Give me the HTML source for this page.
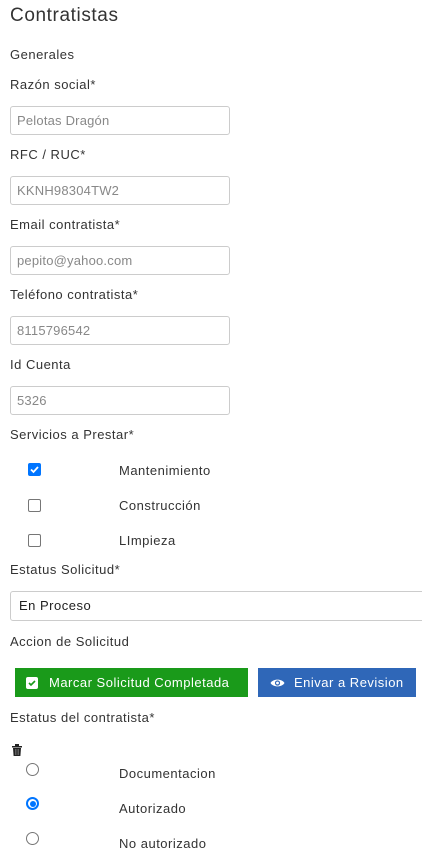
<!DOCTYPE html>
<html><head><meta charset="utf-8"><style>
*{box-sizing:border-box;margin:0;padding:0}
body{width:422px;height:858px;overflow:hidden;background:#fff;font-family:"Liberation Sans",sans-serif;color:#333;font-size:13px;position:relative;letter-spacing:0.5px}
.a{position:absolute;white-space:nowrap}
.lbl{font-size:13px;line-height:16px;top:1px}
.in{position:absolute;left:10px;width:220px;height:29px;border:1px solid #ccc;border-radius:3px;color:#888;font-size:13px;padding:6px 6px;line-height:16px;letter-spacing:0.2px}
.cb{position:absolute;left:28px;width:13px;height:13px;border:1px solid #767676;border-radius:2px;background:#fff}
.rd{position:absolute;left:26px;width:13px;height:13px;border:1px solid #767676;border-radius:50%;background:#fff}
.btn{position:absolute;top:668px;height:29px;color:#fff;font-size:13px;line-height:29px;white-space:nowrap}
</style></head><body>
<div class="a" style="left:10px;top:5px;font-size:19px;line-height:22px;color:#333;letter-spacing:0.6px">Contratistas</div>
<div class="a lbl" style="left:10px;top:47px">Generales</div>
<div class="a lbl" style="left:10px;top:77px">Razón social*</div>
<div class="in" style="top:106px">Pelotas Dragón</div>
<div class="a lbl" style="left:10px;top:147px">RFC / RUC*</div>
<div class="in" style="top:176px">KKNH98304TW2</div>
<div class="a lbl" style="left:10px;top:217px">Email contratista*</div>
<div class="in" style="top:246px">pepito@yahoo.com</div>
<div class="a lbl" style="left:10px;top:287px">Teléfono contratista*</div>
<div class="in" style="top:316px">8115796542</div>
<div class="a lbl" style="left:10px;top:357px">Id Cuenta</div>
<div class="in" style="top:386px">5326</div>
<div class="a lbl" style="left:10px;top:427px">Servicios a Prestar*</div>
<div class="cb" style="top:463px;background:#0075ff;border-color:#0075ff"><svg width="11" height="11" viewBox="0 0 11 11" style="position:absolute;left:0;top:0"><path d="M2 5.5l2.5 2.5 4.5-5" stroke="#fff" stroke-width="1.8" fill="none"/></svg></div>
<div class="a lbl" style="left:119px;top:463px">Mantenimiento</div>
<div class="cb" style="top:499px"></div>
<div class="a lbl" style="left:119px;top:498px">Construcción</div>
<div class="cb" style="top:534px"></div>
<div class="a lbl" style="left:119px;top:533px">LImpieza</div>
<div class="a lbl" style="left:10px;top:562px">Estatus Solicitud*</div>
<div style="position:absolute;left:10px;top:591px;width:420px;height:30px;border:1px solid #ccc;border-radius:3px;padding:6px 8px;line-height:16px;color:#222">En Proceso</div>
<div class="a lbl" style="left:10px;top:634px">Accion de Solicitud</div>
<div class="btn" style="left:15px;width:233px;background:#1a9a1a;padding-left:11px"><span style="display:inline-block;width:12px;height:12px;background:#fff;border-radius:2px;vertical-align:-2px;position:relative"><svg width="12" height="12" viewBox="0 0 12 12" style="position:absolute;left:0;top:0"><path d="M3 6l2 2 4-4" stroke="#1a9a1a" stroke-width="1.6" fill="none"/></svg></span><span style="margin-left:11px">Marcar Solicitud Completada</span></div>
<div class="btn" style="left:258px;width:158px;background:#2f67b8;padding-left:12px"><svg width="15" height="10" viewBox="0 0 15 10" style="vertical-align:-1px"><path d="M0.5 5C3 0.5 12 0.5 14.5 5C12 9.5 3 9.5 0.5 5Z" fill="#fff"/><circle cx="7.5" cy="5" r="2.6" fill="#2f67b8"/><circle cx="7.5" cy="5" r="1.4" fill="#fff"/></svg><span style="margin-left:9px">Enivar a Revision</span></div>
<div class="a lbl" style="left:10px;top:710px">Estatus del contratista*</div>
<svg class="a" style="left:12px;top:744px" width="10" height="12" viewBox="0 0 10 12"><rect x="3" y="0" width="4" height="2" fill="#222"/><rect x="0" y="2" width="10" height="1.5" fill="#222"/><path d="M1 4h8l-0.6 8H1.6Z" fill="#222"/><path d="M3.5 5v6M5 5v6M6.5 5v6" stroke="#888" stroke-width="0.6"/></svg>
<div class="rd" style="top:763px"></div>
<div class="a lbl" style="left:119px;top:766px">Documentacion</div>
<div class="rd" style="top:797px;border:2px solid #0075ff"><div style="position:absolute;left:1.5px;top:1.5px;width:6px;height:6px;border-radius:50%;background:#0075ff"></div></div>
<div class="a lbl" style="left:119px;top:801px">Autorizado</div>
<div class="rd" style="top:832px"></div>
<div class="a lbl" style="left:119px;top:836px">No autorizado</div>
</body></html>
